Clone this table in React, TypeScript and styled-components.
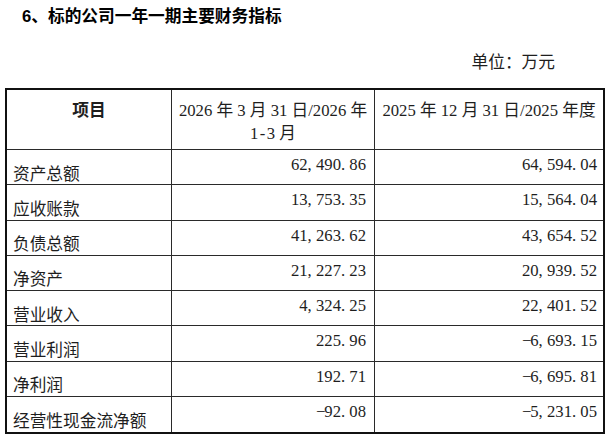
import React from "react";
import styled, { createGlobalStyle } from "styled-components";

const GlobalStyle = createGlobalStyle`
  html, body { margin: 0; padding: 0; background: #ffffff; }
  body {
    font-family: "Liberation Serif", "Noto Sans CJK SC", serif;
    color: #1e1e1e;
  }
`;

const Page = styled.div`
  width: 613px;
  height: 442px;
  overflow: hidden;
`;

const Title = styled.h2`
  margin: 0;
  padding: 6px 0 0 22px;
  font-family: "Liberation Sans", "Noto Sans CJK SC", sans-serif;
  font-weight: 700;
  font-size: 16.7px;
  line-height: 22px;
  color: #000;
`;

const Unit = styled.div`
  margin-top: 22px;
  padding-right: 58px;
  text-align: right;
  font-family: "Noto Sans CJK SC", sans-serif;
  font-size: 16.7px;
  line-height: 22px;
  color: #1e1e1e;
`;

const Table = styled.table`
  margin: 16px 0 0 5px;
  width: 600px;
  table-layout: fixed;
  border-collapse: separate;
  border-spacing: 0;
  border: 2px solid #111;
`;

const HeadRow = styled.tr`
  height: 60px;
`;

const BodyRow = styled.tr`
  height: 35.3px;
  &:last-child td { border-bottom: none; }
`;

const HeadCell = styled.th<{ $bold?: boolean }>`
  padding: 10px 4px 0;
  vertical-align: top;
  text-align: center;
  font-family: ${(p) =>
    p.$bold
      ? `"Liberation Sans", "Noto Sans CJK SC", sans-serif`
      : `"Liberation Serif", "Noto Sans CJK SC", serif`};
  font-weight: ${(p) => (p.$bold ? 700 : 400)};
  font-size: 16.7px;
  line-height: 22.5px;
  color: #1e1e1e;
  border-right: 1px solid #2a2a2a;
  border-bottom: 1px solid #2a2a2a;
  &:last-child { border-right: none; }
`;

const LabelCell = styled.td`
  padding: 12.5px 4px 0 6px;
  vertical-align: top;
  font-family: "Noto Sans CJK SC", sans-serif;
  font-size: 16.7px;
  line-height: 20px;
  white-space: nowrap;
  border-right: 1px solid #2a2a2a;
  border-bottom: 1px solid #2a2a2a;
`;

const NumCell = styled.td<{ $pad: number }>`
  padding: 5px ${(p) => p.$pad}px 0 4px;
  vertical-align: top;
  text-align: right;
  font-family: "Liberation Serif", serif;
  font-size: 16.7px;
  line-height: 20px;
  white-space: nowrap;
  border-right: 1px solid #2a2a2a;
  border-bottom: 1px solid #2a2a2a;
  &:last-child { border-right: none; }
`;

const Sep = styled.span<{ $center?: boolean }>`
  display: inline-block;
  width: 0.5em;
  text-align: ${(p) => (p.$center ? "center" : "left")};
`;

function Num({ v }: { v: string }) {
  const parts = v.match(/\d+|[^\d]/g) || [];
  return (
    <>
      {parts.map((p, i) =>
        /\d/.test(p) ? (
          <React.Fragment key={i}>{p}</React.Fragment>
        ) : (
          <Sep key={i} $center={p === "−" || p === "-"}>
            {p}
          </Sep>
        )
      )}
    </>
  );
}

const rows: [string, string, string][] = [
  ["资产总额", "62,490.86", "64,594.04"],
  ["应收账款", "13,753.35", "15,564.04"],
  ["负债总额", "41,263.62", "43,654.52"],
  ["净资产", "21,227.23", "20,939.52"],
  ["营业收入", "4,324.25", "22,401.52"],
  ["营业利润", "225.96", "−6,693.15"],
  ["净利润", "192.71", "−6,695.81"],
  ["经营性现金流净额", "−92.08", "−5,231.05"],
];

export default function App() {
  return (
    <Page>
      <GlobalStyle />
      <Title>6、标的公司一年一期主要财务指标</Title>
      <Unit>单位：万元</Unit>
      <Table>
        <colgroup>
          <col style={{ width: 165 }} />
          <col style={{ width: 203 }} />
          <col style={{ width: 228 }} />
        </colgroup>
        <thead>
          <HeadRow>
            <HeadCell $bold>项目</HeadCell>
            <HeadCell>
              2026 年 3 月 31 日/2026 年<br />
              1<Sep $center>-</Sep>3 月
            </HeadCell>
            <HeadCell>2025 年 12 月 31 日/2025 年度</HeadCell>
          </HeadRow>
        </thead>
        <tbody>
          {rows.map(([label, a, b]) => (
            <BodyRow key={label}>
              <LabelCell>{label}</LabelCell>
              <NumCell $pad={8}>
                <Num v={a} />
              </NumCell>
              <NumCell $pad={6}>
                <Num v={b} />
              </NumCell>
            </BodyRow>
          ))}
        </tbody>
      </Table>
    </Page>
  );
}
